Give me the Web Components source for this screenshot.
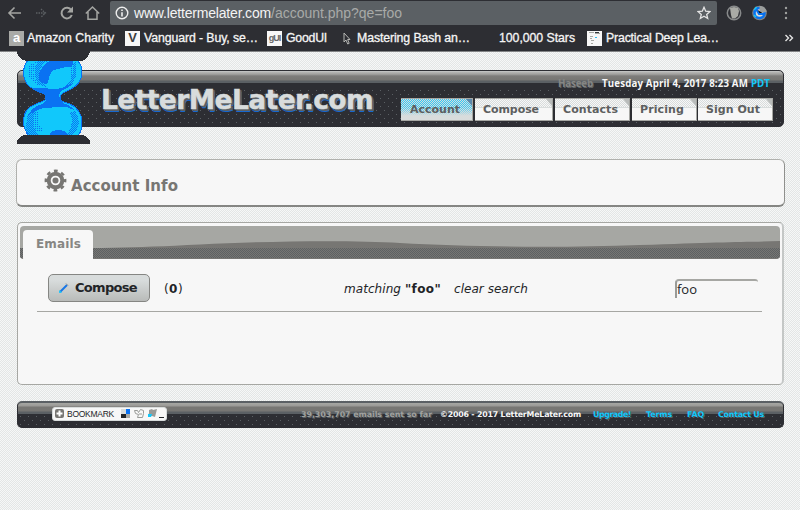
<!DOCTYPE html>
<html lang="en"><head><meta charset="utf-8"><title>LetterMeLater.com</title>
<style>html,body{margin:0;width:800px;height:510px;overflow:hidden;font-family:"DejaVu Sans",sans-serif}</style></head>
<body><mail-app></mail-app>
<script>
// Text line spread evenly over a given width.
class FitText extends HTMLElement{
  constructor(){super();this.attachShadow({mode:'open'}).innerHTML='<style>:host{display:block;flex:none;white-space:pre}span{display:inline-block}</style><span><slot></slot></span>';}
  connectedCallback(){
    const w=+this.getAttribute('w'),s=this.shadowRoot.querySelector('span');
    this.style.width=w+'px';
    const n=this.textContent.length;
    if(n) s.style.letterSpacing=((w-s.getBoundingClientRect().width)/n)+'px';
  }
}
function define(name,html){
  customElements.define(name,class extends HTMLElement{
    constructor(){super();const t=document.createElement('template');t.innerHTML=html;this.attachShadow({mode:'open'}).append(t.content.cloneNode(true));}
  });
}
customElements.define('fit-text',FitText);

define('browser-toolbar',`<style>
:host{display:flex;align-items:center;height:26px;background:#2d2e33;font:14px/24px "Liberation Sans",Arial,sans-serif}
.nav{flex:none;width:110px;height:26px}
.url{display:flex;align-items:center;width:607px;height:24px;margin-bottom:1px;background:#5b6064;border-radius:2px;color:#f4f4f4;flex:none}
.url svg{flex:none;margin:1px 5px 0 5px}.path{color:#a8aaa8}.star{margin:0 6px 0 auto!important}
</style>
<svg class="nav" viewBox="0 0 110 26" fill="none" stroke="#a4a5a2" stroke-width="1.6">
<path d="M21 13H9M14.500 7.500L9 13l5.500 5.500"/><path stroke="#5c6064" stroke-width="1.300" stroke-dasharray="1.500 1" d="M36 13h9M41 9l4.500 4-4.500 4"/>
<path stroke-width="2" d="M71.300 10.200A5.300 5.300 0 1 0 71.800 15"/><path fill="#a4a5a2" stroke="none" d="M73 6.500v6h-6z"/>
<path stroke-width="1.500" d="M85.800 13.500L92.500 7l6.700 6.500M88 12v7.300h9V12"/></svg>
<div class="url"><svg width="14" height="14" viewBox="0 0 14 14"><circle cx="7" cy="7" r="5.800" fill="none" stroke="#ededed" stroke-width="1.400"/><path stroke="#ededed" stroke-width="1.600" d="M7 6.200v4.300M7 3.400v1.600"/></svg>
<fit-text w="137">www.lettermelater.com</fit-text><fit-text class="path" w="131">/account.php?qe=foo</fit-text>
<svg class="star" width="14" height="14" viewBox="0 0 14 14"><path fill="none" stroke="#e4e4e4" stroke-width="1.300" d="M7 1.300l1.700 3.900 4.200.4-3.200 2.800 1 4.100L7 10.300l-3.700 2.200 1-4.100-3.200-2.800 4.200-.4z"/></svg></div>
<svg width="83" height="26" viewBox="0 0 83 26"><circle cx="17" cy="13" r="6.700" fill="none" stroke="#87898a" stroke-width="1.500"/><path fill="#a9aaa5" d="M13 8l4-1 4 1 1 3-1 5-3 2.500h-3L14 15z"/>
<circle cx="42.500" cy="13" r="7.300" fill="#818588"/><circle cx="42.500" cy="13" r="5" fill="#d8dcdc" stroke="#0872ef" stroke-width="2.500"/><path fill="#9b9e9d" d="M42.500 13V5.700a7.300 7.300 0 0 1 7.200 6.300z"/><path stroke="#10c8fa" stroke-width="1.500" d="M37.500 10l2-3M37 15l2 2"/><path stroke="#0872ef" stroke-width="2" d="M39 9l3 5h5"/>
<g fill="#9fa19f"><circle cx="69" cy="8" r="1.200"/><circle cx="69" cy="13" r="1.200"/><circle cx="69" cy="18" r="1.200"/></g></svg>`);

define('bookmark-bar',`<style>
:host{display:flex;align-items:center;height:26px;box-sizing:border-box;padding:0 0 1px 9px;background:#2d2e33;border-bottom:1px solid #818384;color:#f5f5f5;font:12.300px/20px "Liberation Sans",Arial,sans-serif;-webkit-text-stroke:.3px #f5f5f5}
i{flex:none;display:block;width:15px;height:15px;font:bold 13px/14px "Liberation Sans",sans-serif;text-align:center;background:#f7f7f7;color:#3a3c3f;-webkit-text-stroke:0}
svg{flex:none}
</style>
<i style="background:#a9aaa7;color:#fff">a</i><fit-text style="margin-left:3px" w="87">Amazon Charity</fit-text>
<i style="margin-left:11px">V</i><fit-text style="margin-left:4px" w="114">Vanguard - Buy, se…</fit-text>
<i style="margin-left:9px;font-size:9px;letter-spacing:-1px;color:#66686a">gUI</i><fit-text style="margin-left:4px" w="41">GoodUI</fit-text>
<svg style="margin-left:16px" width="8" height="13" viewBox="0 0 8 13"><path fill="#2d2e33" stroke="#b5b6b3" d="M1 1v9l2-2 1.700 4 1.500-.700L4.600 7.500H7z"/></svg><fit-text style="margin-left:6px" w="113">Mastering Bash an…</fit-text>
<fit-text style="margin-left:29px" w="76">100,000 Stars</fit-text>
<svg style="margin-left:12px" width="15" height="15" viewBox="0 0 15 15"><path fill="#f7f7f7" d="M0 0h15v15H0z"/><path stroke="#a6a7a3" d="M2 1.500h5M8 2.500h5M3 5.500h3M3 7.500h2M4 9.500h3M4 12.500h2"/><path stroke="#33363a" d="M8 1.500h4"/><path stroke="#2bbdf0" d="M8 6.500h2"/></svg><fit-text style="margin-left:4px" w="113">Practical Deep Lea…</fit-text>
<svg style="margin-left:65px" width="10" height="8" viewBox="0 0 10 8" fill="none" stroke="#e4e4e4" stroke-width="1.400"><path d="M1.500 1l3 3-3 3M5.500 1l3 3-3 3"/></svg>`);

define('hour-glass',`<style>:host{display:block;width:73px;height:96px}svg{display:block}</style>
<svg width="73" height="96" viewBox="0 0 73 96"><defs>
<pattern id="d" width="2" height="2" patternUnits="userSpaceOnUse"><path fill="#0a72f2" d="M0 0h1v1H0z"/></pattern>
<pattern id="k" width="2" height="2" patternUnits="userSpaceOnUse"><path fill="#0a72f2" d="M0 0h1v1H0zM1 1h1v1H1z"/></pattern></defs>
<g shape-rendering="crispEdges">
<path fill="#11c8fb" stroke="#0a72f2" d="M11 12C7 17 6.500 21 6.500 25c0 8 5 14 11.500 17 5 3 11 3 11 7 0 5-5 4-10 7C11 59 6.500 64 6.500 73c0 7 2 11 6 16h47c4-3 5.500-9 5.500-14 0-9-5-16-12-19-5-2-10-2-10-7 0-4 6-5 11-8 6-3 11-9 11-17 0-5-2-9-5-12z"/>
<path fill="#0a72f2" d="M35 11h20c2 3 1 6-1 8-4-1-8 1-13 2-6 0-8 5-9 9-1 7-4 7-8 4-5-4-2-11 1-14 2-4 5-5 10-9zM22 40c10 0 15 2 23 0l11-5c-3 4-8 6-12 8-3 3-2 9 2 12 4 1 9 4 11 7-6-3-10-4-16-3-7 1-15 0-20 3-5 2-8 4-11 7 3-6 7-10 12-12 4-1 7-2 7-7 0-6-9-5-14-10zM32 88c2-6 9-8 17-4l4 5H28z"/>
<path fill="url(#k)" d="M33 12c-7 3-10 7-10 13 0 5 1 10 6 14l-8-3c-4-7-5-15 0-24zM57 13c3 7 3 15-1 22l-9 4c8-5 9-12 9-18zM19 62c-5 8-4 19 4 27H12c-5-10-4-22 7-27zM58 63c6 9 5 18-3 25l-9 1c9-6 11-16 7-24z"/>
<path fill="url(#d)" d="M20 12c-5 8-5 17 1 25-8-3-12-13-9-19zM53 16l6-2c3 7 1 16-4 22-1-5 0-11-2-20zM22 62c-3 8-1 15 5 22h-9c-6-7-6-17-2-20zM52 60c5 7 5 19-2 27l6-2c4-8 4-18-4-25z"/>
<path fill="#2d2e33" d="M0 0h73v4c-2 6-5 9-10 9H10C4 12 1 9 0 4zM0 96v-3c3-5 5-6 10-6h53c5 0 8 2 10 6v3z"/></g></svg>`);

define('nav-tab',`<style>
:host{display:flex;flex:none;box-sizing:border-box;height:23px;align-items:center;border-top:1px solid #a6a7a3;border-bottom:1px solid #a6a7a3;border-right:1px solid #a6a7a3;position:relative;color:#5d5f5f;font:bold 11px/21px "DejaVu Sans",sans-serif;
background:linear-gradient(#f7f7f700 0 8px,#d8dcdc 8px 9px,#f7f7f7 9px),repeating-conic-gradient(#d8dcdc 0 25%,#f7f7f7 0 50%) 0 0/2px 2px}
:host([on]){background:linear-gradient(#d8dcdc00 0 40%,#d8dcdc 80%),repeating-conic-gradient(#35c8f5 0 25%,#d8dcdc 0 50%) 0 0/2px 2px}
:host::after{content:"";position:absolute;right:0;top:0;border-style:solid;border-width:0 6px 7px 0;border-color:transparent #b9bcbb transparent transparent}
:host([on])::after{border-right-color:#5b88aa}
</style><slot></slot>`);

define('site-header',`<style>
:host{display:flex;justify-content:space-between;box-sizing:border-box;width:767px;height:57px;border:1px solid #2d2e33;border-radius:5px;
background:linear-gradient(#c9caca 0,#aaa9a7 2px,#a5a5a2 3px,#7d7c7a 5px,#777673 9px,#5b6064 10px,#5b6064 12px,#2d2e33 12px,#2d2e33 17px,#2d2e3300 17px),conic-gradient(#5b6064 0 25%,#0000 0) 1px 18px/8px 8px,conic-gradient(#5b6064 0 25%,#0000 0) 5px 22px/8px 8px,#2d2e33;
background:linear-gradient(#c9caca 0,#aaa9a7 2px,#a5a5a2 3px,#7d7c7a 5px,#777673 9px,#5b6064 10px,#5b6064 12px,#2d2e33 12px,#2d2e33 17px,#2d2e3300 17px),radial-gradient(circle at 1.500px 1.500px,#5b6064 .600px,#0000 .700px) 1px 18px/8px 8px,radial-gradient(circle at 1.500px 1.500px,#5b6064 .600px,#0000 .700px) 5px 22px/8px 8px,#2d2e33}
h1{margin:12px 0 0 83px;font:bold 26.500px/34px "DejaVu Sans",sans-serif;color:#d8dcdc;-webkit-text-stroke:.5px #d8dcdc;text-shadow:1px 1px #5b6064,2px 1px #5b6064,2px 2px #5b6064,2px 3px #1768d0}
.side{width:382px;display:flex;flex-direction:column}
.top{display:flex;height:17px;padding:5px 0 0 157px;gap:9px;font:bold 9.700px/15px "Open Sans",sans-serif;color:#f7f7f7;box-sizing:content-box}
.top,.top *{flex-shrink:0}.tabs{display:flex;margin-top:5px}
</style><h1><fit-text w="272">LetterMeLater.com</fit-text></h1>
<div class="side"><div class="top"><fit-text w="35" style="color:#858684;text-shadow:1px 1px #606466">Haseeb</fit-text><fit-text w="146">Tuesday April 4, 2017 8:23 AM</fit-text><fit-text w="19" style="color:#11c8fb;margin-left:-6px">PDT</fit-text></div>
<div class="tabs">
<nav-tab on style="width:72px;padding-left:9px"><fit-text w="50">Account</fit-text></nav-tab>
<nav-tab style="width:78px;margin-left:2px;padding-left:8px"><fit-text w="56">Compose</fit-text></nav-tab>
<nav-tab style="width:75px;margin-left:2px;padding-left:8px"><fit-text w="55">Contacts</fit-text></nav-tab>
<nav-tab style="width:65px;margin-left:2px;padding-left:8px"><fit-text w="44">Pricing</fit-text></nav-tab>
<nav-tab style="width:75px;margin-left:1px;padding-left:8px"><fit-text w="54">Sign Out</fit-text></nav-tab>
</div></div>`);

define('page-title',`<style>
:host{display:flex;box-sizing:border-box;width:769px;height:48px;background:#f7f7f7;border:1px solid #b0b1ad;border-bottom:2px solid #858683;border-right-color:#8f908d;border-radius:6px;padding-left:27px;color:#777673;font:bold 15px/20px "DejaVu Sans",sans-serif}
svg{margin:9px 4px 0 0}fit-text{margin-top:16px}
</style><svg width="23" height="23" viewBox="-11.500 -11.500 23 23" fill="none" stroke="#777673"><circle r="6.800" stroke-width="4"/><circle r="9.700" stroke-width="2.400" stroke-dasharray="3.800 3.818" stroke-dashoffset="1.900"/><circle r="3" fill="#777673" stroke="none"/></svg>
<fit-text w="107">Account Info</fit-text>`);

define('mail-panel',`<style>
:host{display:block;box-sizing:border-box;width:767px;height:163px;background:#f7f7f7;border:1px solid #a6a7a3;border-right:2px solid #c4c7c6;border-radius:5px;padding:3px 2px 0 2px}
.bar{position:relative;display:flex;height:33px;border-radius:4px;overflow:hidden;background:#a6a7a3;padding:4px 0 0 3px;box-sizing:border-box}
.wave{position:absolute;inset:0}
.tab{position:relative;width:70px;height:29px;background:#f7f7f7;border-radius:4px 4px 0 0;box-sizing:border-box;padding:5px 0 0 13px;font:bold 12px/18px "DejaVu Sans",sans-serif;color:#878683}
.row{display:flex;align-items:center;margin-left:17px;width:725px;height:51px;padding-top:1px;border-bottom:1px solid #a6a7a3;box-sizing:content-box;font:12px/20px "DejaVu Sans",sans-serif;color:#222427}
button{display:flex;align-items:center;box-sizing:border-box;margin:5px 0 0 11px;width:102px;height:28px;padding:0 0 0 9px;border:1px solid #858683;border-radius:5px;background:linear-gradient(#d8dcdc 20%,#b9bbb9);font:bold 13px/20px "DejaVu Sans",sans-serif;color:#222427}
button fit-text{margin-left:6px}.row>fit-text{margin-top:6px}
.search{box-sizing:border-box;margin:6px 0 0 147px;width:83px;height:19px;border-top:2px solid #a6a7a3;border-left:2px solid #999b98;border-radius:4px 3px 0 0;font:13px/16px "Open Sans",sans-serif}
</style><div class="bar"><svg class="wave" width="760" height="33" viewBox="0 0 760 33"><defs><pattern id="p" width="2" height="2" patternUnits="userSpaceOnUse"><path fill="#777673" d="M0 0h2v2H0z"/><path fill="#5d6163" d="M0 0h1v1H0zM1 1h1v1H1z"/></pattern></defs><path fill="#777673" d="M0 24C75 22 110 22 180 18.500S330 14 380 17C450 21 540 22 620 19S720 16 760 15V33H0z"/><path fill="url(#p)" d="M0 22H760V32H0z"/></svg>
<div class="tab"><fit-text w="45">Emails</fit-text></div></div>
<div class="row"><button><svg width="11" height="12" viewBox="0 0 11 12"><path stroke="#1977e6" stroke-width="2" d="M2 10l7-7"/><path fill="#11c8fb" d="M1 11l.5-3 2.500 2.500z"/><path stroke="#898d90" d="M8 1.500l2 2"/></svg><fit-text w="62">Compose</fit-text></button>
<fit-text w="19" style="margin-left:14px">(<b>0</b>)</fit-text>
<fit-text w="57" style="margin-left:161px;font-style:italic">matching</fit-text><fit-text w="36" style="margin-left:4px;font-weight:bold">"foo"</fit-text><fit-text w="74" style="margin-left:13px;font-style:italic">clear search</fit-text>
<div class="search"><fit-text w="20">foo</fit-text></div></div>`);

define('site-footer',`<style>
:host{display:flex;align-items:center;box-sizing:border-box;width:767px;height:27px;border:1px solid #2d2e33;border-top:2px solid #5b6064;border-radius:5px;background:linear-gradient(#a6a7a3 0,#9a9996 3px,#777673 4px,#777673 8px,#5b6064 9px,#5b6064 11px,#2d2e33 11px,#2d2e33 13px,#2d2e3300 13px),radial-gradient(circle at 1.500px 1.500px,#5b6064 .600px,#0000 .700px) 1px 12px/8px 8px,radial-gradient(circle at 1.500px 1.500px,#5b6064 .600px,#0000 .700px) 5px 16px/8px 8px,#2d2e33;font:bold 7.900px/12px "DejaVu Sans",sans-serif;color:#f7f7f7;text-shadow:1px 1px #2d2e33}
.mark{display:flex;align-items:center;box-sizing:border-box;width:115px;height:14px;margin:-3px 134px 0 34px;padding-left:2px;background:#f7f7f7;border:1px solid #d8dcdc;border-radius:3px;color:#222427;text-shadow:none;font:8.500px/12px "Liberation Sans",sans-serif}
.mark fit-text{margin:0 6px 0 3px}.b{color:#11c8fb;text-shadow:1px 1px #5b6064}
</style><div class="mark"><svg width="9" height="9" viewBox="0 0 9 9"><rect width="9" height="9" rx="2" fill="#777673"/><path stroke="#fff" stroke-width="2" d="M4.500 1.500v6M1.500 4.500h6"/></svg><fit-text w="47">BOOKMARK</fit-text>
<svg width="44" height="11" viewBox="0 0 44 11"><path fill="#d8dcdc" d="M1 1h5v5H1z"/><path fill="#0a72f2" d="M6 1h4v5H6z"/><path fill="#222427" d="M1 6h5v4H1z"/><path fill="#a6a7a3" d="M6 6h4v4H6z"/><path fill="none" stroke="#999b98" d="M14.500 2.500h3l1 2 2-3 3 1v3l-1 4h-5l1-3-3-1zM19 6h3"/><path fill="#999b98" d="M29 2l3-1 1 1 4-1-2 8-3-1-4 1 1-4z"/><path fill="#11c8fb" d="M28 6h4l-1 3h-3z"/><path fill="#222427" d="M39 9h5v1h-5z"/></svg></div>
<fit-text w="131" style="color:#a0a19e;text-shadow:1px 1px #5b6064"><b>39,303,707</b> emails sent so far</fit-text>
<fit-text w="141" style="margin-left:8px">©2006 - 2017 LetterMeLater.com</fit-text>
<fit-text class="b" w="38" style="margin-left:12px">Upgrade!</fit-text><fit-text class="b" w="26" style="margin-left:15px">Terms</fit-text><fit-text class="b" w="17" style="margin-left:15px">FAQ</fit-text><fit-text class="b" w="46" style="margin-left:14px">Contact Us</fit-text>`);

define('mail-app',`<style>
:host{display:flex;flex-direction:column;width:800px;height:510px;overflow:hidden;position:relative;background:repeating-conic-gradient(#e3e6e5 0 25%,#f6f7f7 0 50%) 0 0/2px 2px}
site-header{margin:18px 0 0 17px}page-title{margin:32px 0 0 16px}mail-panel{margin:15px 0 0 17px}site-footer{margin:16px 0 0 17px}
hour-glass{position:absolute;left:17px;top:48px}bookmark-bar{position:relative}
</style><browser-toolbar></browser-toolbar><bookmark-bar></bookmark-bar><site-header></site-header><page-title></page-title><mail-panel></mail-panel><site-footer></site-footer><hour-glass></hour-glass>`);
</script></body></html>
